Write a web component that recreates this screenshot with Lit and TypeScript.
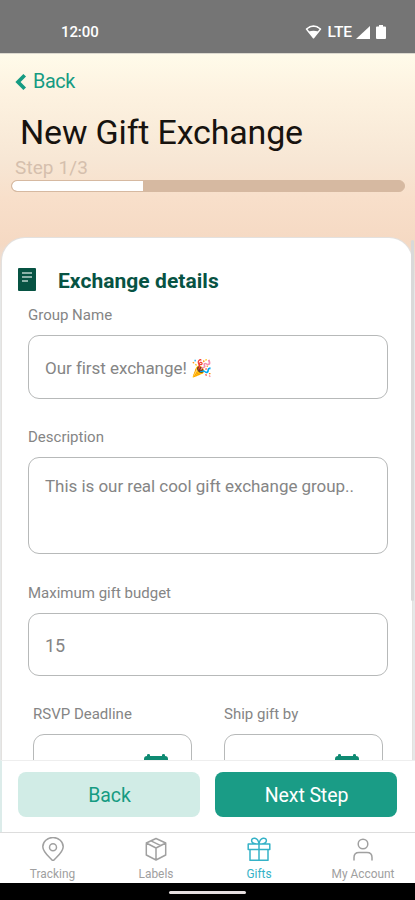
import { LitElement, html, css, svg } from "lit";
import { customElement } from "lit/decorators.js";
import { classMap } from "lit/directives/class-map.js";

const calendar = html`<svg class="cal" viewBox="0 0 24 24" width="24" height="24">
  <path fill="#0e8a72" d="M0 5q0-3 3-3V1q0-1 1.500-1T6 1v1h12V1q0-1 1.500-1T21 1v1q3 0 3 3v16q0 3-3 3H3q-3 0-3-3z"/></svg>`;

const tabs = [
  { label: "Tracking", icon: svg`<path d="M12 24C7.500 19.300 1.800 15 1.800 9.700a10.200 9.200 0 0 1 20.400 0C22.200 15 16.500 19.300 12 24z"/><circle cx="12" cy="10.200" r="3.500"/>` },
  { label: "Labels", icon: svg`<path d="M12 1.500 21.700 6v12L12 23 2.300 18V6zM2.300 6 12 11l9.700-5M12 11v12M7 3.800l9.700 4.800"/>` },
  { label: "Gifts", active: true, icon: svg`<path d="M1.200 7h21.600v5.500H1.200zM3 12.500v10.800h18V12.500M12 7v16.300M12 7C9 7 4.600 6.500 4.600 3.700 4.600 0 11 0 12 7zM12 7c3 0 7.400-.5 7.400-3.300C19.400 0 13 0 12 7z"/>` },
  { label: "My Account", icon: svg`<circle cx="12" cy="7" r="4.800"/><path d="M3 23v-2.500Q3 15.500 8 15.500h8q5 0 5 5V23"/>` },
];

@customElement("app-root")
export class AppRoot extends LitElement {
  static styles = css`
    :host { display: flex; flex-direction: column; width: 415px; height: 900px; overflow: hidden;
      font-family: Roboto, "Liberation Sans", sans-serif; background: #fff; color: #858585; }
    * { box-sizing: border-box; }
    svg { display: block; flex: none; }
    span, label { white-space: nowrap; }
    .status { height: 53px; flex: none; background: #757575; color: #fff; display: flex; align-items: flex-start; padding: 23px 29px 0 61px; font-size: 15px; line-height: 18px; }
    .clock { font-weight: 500; letter-spacing: -.1px; margin-right: auto; }
    .lte { margin: 0 4px 0 6px; font-size: 15.500px; font-weight: 500; letter-spacing: -.1px; }
    .battery { margin-left: 6px; }
    .screen { flex: none; height: 707px; overflow: hidden; display: flex; flex-direction: column; border-top: 1px solid #dcd9cf;
      background: linear-gradient(#fffbea 0, #fdf2e0 40px, #f7e7d5 105px, #f8dfca 145px, #f5d9c3 190px, #e8e0db 215px, #e6e8e8 240px); }
    .back { display: flex; align-items: center; height: 24px; margin: 16px 0 0 15px; color: #159b82; font-size: 19.800px; letter-spacing: -.4px; gap: 6px; }
    h1 { margin: 17px 0 0 20px; font-weight: 400; font-size: 34px; line-height: 44px; color: #17130f; white-space: nowrap; letter-spacing: -.17px; }
    .step { margin: 3px 0 0 15px; font-size: 19px; line-height: 22px; color: #d5bfad; letter-spacing: .1px; }
    .track { margin: 1px 10px 0 11px; height: 12px; flex: none; border-radius: 6px; background: #d6b9a1; border: 1px solid #d6b9a1; overflow: hidden; }
    .fill { width: 131px; height: 10px; background: #fff; border-radius: 5px 0 0 5px; }
    .card { flex: 1; margin: 46px 3px 0 2px; background: #fff; border-radius: 23px 23px 0 0; padding: 31px 22px 0 26px; box-shadow: 0 0 0 1px #e3e1df; }
    .head { display: flex; align-items: center; height: 24px; margin-left: -10px; }
    .head svg { margin-top: -3px; }
    h2 { margin: 0 0 0 22px; font-size: 21px; line-height: 24px; font-weight: 700; color: #075343; letter-spacing: .05px; white-space: nowrap; }
    label { display: block; font-size: 15px; line-height: 20px; }
    .box { border: 1px solid #b7b9b9; border-radius: 11px; height: 64px; width: 360px; display: flex; align-items: center; padding: 2px 0 0 16px; font-size: 17px; letter-spacing: -.04px; }
    .g { margin: 12px 0 10px; }
    .field { margin-top: 28px; }
    .field .box { margin-top: 10px; }
    .field .area { height: 97px; align-items: flex-start; padding-top: 18px; }
    .budget { margin-top: 29px; }
    .budget .box { height: 63px; font-size: 18px; }
    .dates { display: flex; margin: 28px 0 0 5px; gap: 32px; }
    .dates .date { width: 159px; }
    .dates .box { width: 159px; margin-top: 10px; align-items: flex-start; padding: 19px 23px 0 0; justify-content: flex-end; }
    .actions { height: 72px; flex: none; border-top: 1px solid #eee; border-left: 2px solid #dcecea; padding: 11px 18px 0 16px; display: flex; gap: 15px; background: #fff; }
    button { font: 400 19.500px/45px Roboto, sans-serif; letter-spacing: -.1px; height: 45px; border: 0; border-radius: 8px; padding: 1px 0 0 1px; width: 182px; }
    .light { background: #d1ece6; color: #159b82; }
    .dark { background: #1a9c86; color: #fff; }
    nav { height: 51px; flex: none; border-top: 1px solid #ddd; display: grid; grid-template-columns: 105px 102px 104px 104px; padding-top: 4px; background: #fff; }
    .tab { display: flex; flex-direction: column; align-items: center; gap: 5px; font-size: 11.900px; line-height: 16px; color: #a0a0a0; }
    .tab svg { fill: none; stroke: currentColor; stroke-width: 1.500; stroke-linejoin: round; stroke-linecap: round; }
    .active { color: #35b2c7; }
    .home { flex: 1; background: #000; display: flex; justify-content: center; padding-top: 8px; }
    .pill { width: 77px; height: 3px; border-radius: 2px; background: #e5dfe0; }
    .scroll { position: absolute; left: 411px; top: 240px; width: 3px; height: 361px; background: #d9d9d9; border-radius: 2px; }
  `;

  render() {
    return html`
      <div class="status"><span class="clock">12:00</span>
        <svg width="17" height="17" viewBox="0 0 17 17"><path d="M8.500 14.800 1.500 6Q8.500.2 15.500 6z" fill="none" stroke="#fff" stroke-width="1.500" stroke-linejoin="round"/><path fill="#757575" d="M2.800 6.200Q8.500 2 14.200 6.200L12.500 8.400H4.500z"/><path fill="#fff" d="M3.800 8.500Q8.500 6.800 13.200 8.500L8.500 15z"/></svg>
        <span class="lte">LTE</span>
        <svg width="14" height="17" viewBox="0 0 14 17"><path fill="#fff" d="M14 3v13H0z"/></svg>
        <svg class="battery" width="10" height="17" viewBox="0 0 10 17"><path fill="#fff" d="M1 3.500h2V2h4v1.500h2q1 0 1 1V15q0 1-1 1H1q-1 0-1-1V4.500q0-1 1-1z"/></svg>
      </div>
      <div class="screen">
        <div class="back"><svg width="12" height="18" viewBox="0 0 12 18"><path d="M9.700 2.200 3 9l6.700 6.800" fill="none" stroke="#159b82" stroke-width="3.700"/></svg><span>Back</span></div>
        <h1>New Gift Exchange</h1>
        <div class="step">Step 1/3</div>
        <div class="track"><div class="fill"></div></div>
        <div class="card">
          <div class="head"><svg width="18" height="23" viewBox="0 0 18 23"><rect width="18" height="23" rx="1" fill="#075343"/><path d="M4 5h10M4 9h10M4 13h6" stroke="#b9d2cc" stroke-width="1.600"/></svg><h2>Exchange details</h2></div>
          <label class="g">Group Name</label>
          <div class="box"><span>Our first exchange! 🎉</span></div>
          <div class="field"><label>Description</label><div class="box area"><span>This is our real cool gift exchange group..</span></div></div>
          <div class="field budget"><label>Maximum gift budget</label><div class="box"><span>15</span></div></div>
          <div class="dates">
            <div class="date"><label>RSVP Deadline</label><div class="box">${calendar}</div></div>
            <div class="date"><label>Ship gift by</label><div class="box">${calendar}</div></div>
          </div>
        </div>
      </div>
      <div class="actions"><button class="light">Back</button><button class="dark">Next Step</button></div>
      <nav>${tabs.map((t) => html`<div class=${classMap({ tab: true, active: !!t.active })}><svg width="24" height="24" viewBox="0 0 24 24">${t.icon}</svg><span>${t.label}</span></div>`)}</nav>
      <div class="home"><div class="pill"></div></div>
      <div class="scroll"></div>`;
  }
}
